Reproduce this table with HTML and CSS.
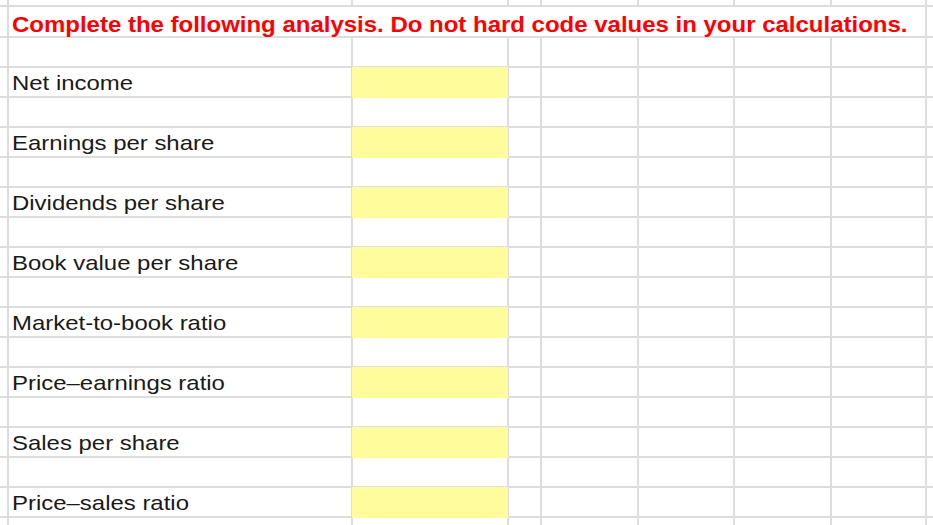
FILE: index.html
```html
<!DOCTYPE html>
<html>
<head>
<meta charset="utf-8">
<link rel="stylesheet" href="styles.css">
</head>
<body>
<div class="sheet">
  <div class="row top"><div></div><div></div><div></div><div></div><div></div><div></div><div></div><div></div><div></div></div>
  <div class="row title-row"><div></div><div class="title"><span class="wide title-text">Complete the following analysis. Do not hard code values in your calculations.</span></div><div></div></div>
  <div class="row"><div></div><div></div><div></div><div></div><div></div><div></div><div></div><div></div><div></div></div>
  <div class="row"><div></div><div class="label"><span class="wide">Net income</span></div><div class="input"></div><div></div><div></div><div></div><div></div><div></div><div></div></div>
  <div class="row"><div></div><div></div><div></div><div></div><div></div><div></div><div></div><div></div><div></div></div>
  <div class="row"><div></div><div class="label"><span class="wide">Earnings per share</span></div><div class="input"></div><div></div><div></div><div></div><div></div><div></div><div></div></div>
  <div class="row"><div></div><div></div><div></div><div></div><div></div><div></div><div></div><div></div><div></div></div>
  <div class="row"><div></div><div class="label"><span class="wide">Dividends per share</span></div><div class="input"></div><div></div><div></div><div></div><div></div><div></div><div></div></div>
  <div class="row"><div></div><div></div><div></div><div></div><div></div><div></div><div></div><div></div><div></div></div>
  <div class="row"><div></div><div class="label"><span class="wide">Book value per share</span></div><div class="input"></div><div></div><div></div><div></div><div></div><div></div><div></div></div>
  <div class="row"><div></div><div></div><div></div><div></div><div></div><div></div><div></div><div></div><div></div></div>
  <div class="row"><div></div><div class="label"><span class="wide">Market-to-book ratio</span></div><div class="input"></div><div></div><div></div><div></div><div></div><div></div><div></div></div>
  <div class="row"><div></div><div></div><div></div><div></div><div></div><div></div><div></div><div></div><div></div></div>
  <div class="row"><div></div><div class="label"><span class="wide">Price–earnings ratio</span></div><div class="input"></div><div></div><div></div><div></div><div></div><div></div><div></div></div>
  <div class="row"><div></div><div></div><div></div><div></div><div></div><div></div><div></div><div></div><div></div></div>
  <div class="row"><div></div><div class="label"><span class="wide">Sales per share</span></div><div class="input"></div><div></div><div></div><div></div><div></div><div></div><div></div></div>
  <div class="row"><div></div><div></div><div></div><div></div><div></div><div></div><div></div><div></div><div></div></div>
  <div class="row"><div></div><div class="label"><span class="wide">Price–sales ratio</span></div><div class="input"></div><div></div><div></div><div></div><div></div><div></div><div></div></div>
  <div class="row last"><div></div><div></div><div></div><div></div><div></div><div></div><div></div><div></div><div></div></div>
</div>
</body>
</html>
```
FILE: styles.css
```css
html, body {
  margin: 0;
  padding: 0;
  background: #ffffff;
  overflow: hidden;
}
body {
  width: 933px;
  height: 525px;
  font-family: "Liberation Sans", Arial, sans-serif;
}
.sheet {
  display: flex;
  flex-direction: column;
  gap: 2px;
  background: #dddddd;
  width: 960px;
}
.row {
  display: grid;
  grid-template-columns: 7px 342px 154px 31px 95px 94px 95px 93px 40px;
  gap: 2px;
  height: 28px;
  background: #dddddd;
}
.row > div {
  background: #ffffff;
  min-width: 0;
}
.row.top {
  height: 5px;
}
.row.title-row {
  height: 29px;
}
.row.last {
  height: 20px;
}
.title {
  grid-column: 2 / 9;
  display: flex;
  align-items: flex-end;
  padding: 0 0 0 3px;
  color: #ff0000;
  font-weight: bold;
  font-size: 22px;
  line-height: 23px;
  white-space: nowrap;
  overflow: visible;
}
.label {
  display: flex;
  align-items: flex-end;
  padding: 0 0 1px 3px;
  font-size: 21px;
  color: #1a1a1a;
  white-space: nowrap;
}
.wide {
  display: inline-block;
  transform: scaleX(1.14);
  transform-origin: left bottom;
}
.wide.title-text {
  transform: scaleX(1.09);
}
.row > .input {
  background: #fffd9b;
  margin: -1px -1px -2px -1px;
  position: relative;
  z-index: 1;
}
```
